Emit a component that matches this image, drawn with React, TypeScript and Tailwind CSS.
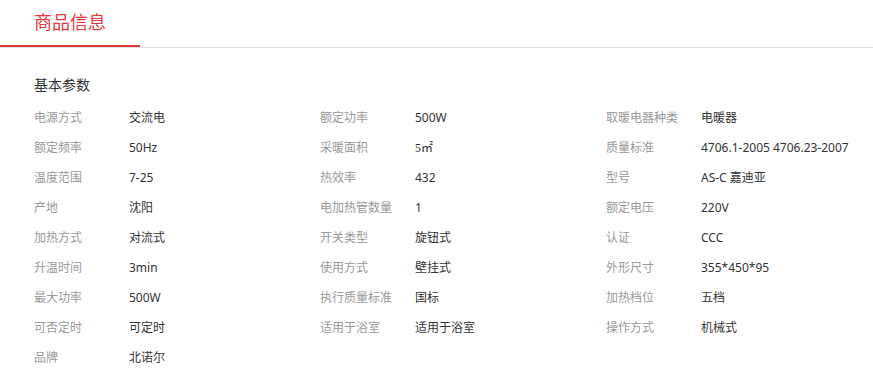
const specs: [string, string][] = [
  ['电源方式', '交流电'],
  ['额定功率', '500W'],
  ['取暖电器种类', '电暖器'],
  ['额定频率', '50Hz'],
  ['采暖面积', '5㎡'],
  ['质量标准', '4706.1-2005 4706.23-2007'],
  ['温度范围', '7-25'],
  ['热效率', '432'],
  ['型号', 'AS-C 嘉迪亚'],
  ['产地', '沈阳'],
  ['电加热管数量', '1'],
  ['额定电压', '220V'],
  ['加热方式', '对流式'],
  ['开关类型', '旋钮式'],
  ['认证', 'CCC'],
  ['升温时间', '3min'],
  ['使用方式', '壁挂式'],
  ['外形尺寸', '355*450*95'],
  ['最大功率', '500W'],
  ['执行质量标准', '国标'],
  ['加热档位', '五档'],
  ['可否定时', '可定时'],
  ['适用于浴室', '适用于浴室'],
  ['操作方式', '机械式'],
  ['品牌', '北诺尔'],
];

export default function App() {
  return (
    <div className="w-[873px] h-[374px] bg-white font-['Noto_Sans','Noto_Sans_CJK_SC',sans-serif] text-[#333]">
      <div className="flex border-b border-[#e0e0e0]">
        <div className="h-[47px] px-[34px] flex items-center border-b-2 border-[#e4393c] text-[18px] text-[#e4393c]">
          商品信息
        </div>
      </div>

      <div className="px-[34px]">
        <div className="mt-[27px] h-[20px] leading-[20px] text-[14px] text-[#333]">基本参数</div>
        <div className="mt-[8px] grid grid-cols-[286px_286px_286px]">
          {specs.map(([label, value]) => (
            <div key={label} className="flex h-[30px] items-center text-[12px]">
              <span className="w-[95px] shrink-0 text-[#999]">{label}</span>
              <span className={value === '5㎡' ? "text-[#333] font-['Liberation_Serif','Noto_Sans_CJK_SC',serif]" : 'text-[#333]'}>
                {value}
              </span>
            </div>
          ))}
        </div>
      </div>
    </div>
  );
}
